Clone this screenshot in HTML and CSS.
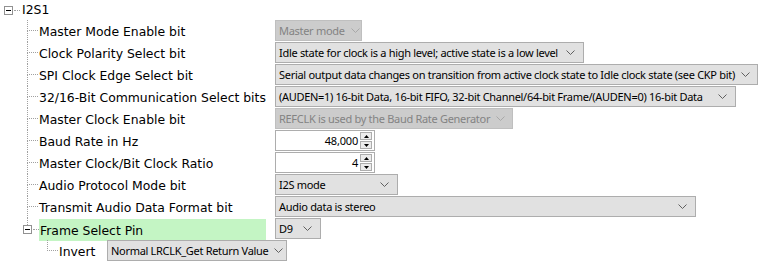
FILE: index.html
```html
<!DOCTYPE html>
<html>
<head>
<meta charset="utf-8">
<link rel="stylesheet" href="styles.css">
</head>
<body>
<div class="tree">
  <div class="row root">
    <span class="exp"><span class="minus"></span></span>
    <span class="hconn"></span>
    <span class="label">I2S1</span>
  </div>

  <div class="row">
    <span class="cell-label"><span class="indent"></span><span class="branch"><span class="up"></span><span class="down"></span></span><span class="label">Master Mode Enable bit</span></span>
    <span class="select disabled w-master"><span class="txt">Master mode</span><svg class="chev" viewBox="0 0 9 5"><path d="M0.5 0.5 L4.5 4.5 L8.5 0.5"/></svg></span>
  </div>

  <div class="row">
    <span class="cell-label"><span class="indent"></span><span class="branch"><span class="up"></span><span class="down"></span></span><span class="label">Clock Polarity Select bit</span></span>
    <span class="select w-ckp"><span class="txt">Idle state for clock is a high level; active state is a low level</span><svg class="chev" viewBox="0 0 9 5"><path d="M0.5 0.5 L4.5 4.5 L8.5 0.5"/></svg></span>
  </div>

  <div class="row">
    <span class="cell-label"><span class="indent"></span><span class="branch"><span class="up"></span><span class="down"></span></span><span class="label">SPI Clock Edge Select bit</span></span>
    <span class="select w-cke"><span class="txt">Serial output data changes on transition from active clock state to Idle clock state (see CKP bit)</span><svg class="chev" viewBox="0 0 9 5"><path d="M0.5 0.5 L4.5 4.5 L8.5 0.5"/></svg></span>
  </div>

  <div class="row">
    <span class="cell-label"><span class="indent"></span><span class="branch"><span class="up"></span><span class="down"></span></span><span class="label">32/16-Bit Communication Select bits</span></span>
    <span class="select w-mode"><span class="txt">(AUDEN=1) 16-bit Data, 16-bit FIFO, 32-bit Channel/64-bit Frame/(AUDEN=0) 16-bit Data</span><svg class="chev" viewBox="0 0 9 5"><path d="M0.5 0.5 L4.5 4.5 L8.5 0.5"/></svg></span>
  </div>

  <div class="row">
    <span class="cell-label"><span class="indent"></span><span class="branch"><span class="up"></span><span class="down"></span></span><span class="label">Master Clock Enable bit</span></span>
    <span class="select disabled w-mclk"><span class="txt">REFCLK is used by the Baud Rate Generator</span><svg class="chev" viewBox="0 0 9 5"><path d="M0.5 0.5 L4.5 4.5 L8.5 0.5"/></svg></span>
  </div>

  <div class="row">
    <span class="cell-label"><span class="indent"></span><span class="branch"><span class="up"></span><span class="down"></span></span><span class="label">Baud Rate in Hz</span></span>
    <span class="spin"><span class="num">48,000</span><span class="btns"><span class="sbtn"><svg viewBox="0 0 5 3"><path d="M0 3 L2.5 0 L5 3 Z"/></svg></span><span class="sbtn"><svg viewBox="0 0 5 3"><path d="M0 0 L5 0 L2.5 3 Z"/></svg></span></span></span>
  </div>

  <div class="row">
    <span class="cell-label"><span class="indent"></span><span class="branch"><span class="up"></span><span class="down"></span></span><span class="label">Master Clock/Bit Clock Ratio</span></span>
    <span class="spin"><span class="num">4</span><span class="btns"><span class="sbtn"><svg viewBox="0 0 5 3"><path d="M0 3 L2.5 0 L5 3 Z"/></svg></span><span class="sbtn"><svg viewBox="0 0 5 3"><path d="M0 0 L5 0 L2.5 3 Z"/></svg></span></span></span>
  </div>

  <div class="row">
    <span class="cell-label"><span class="indent"></span><span class="branch"><span class="up"></span><span class="down"></span></span><span class="label">Audio Protocol Mode bit</span></span>
    <span class="select w-i2s"><span class="txt">I2S mode</span><svg class="chev" viewBox="0 0 9 5"><path d="M0.5 0.5 L4.5 4.5 L8.5 0.5"/></svg></span>
  </div>

  <div class="row">
    <span class="cell-label"><span class="indent"></span><span class="branch"><span class="up"></span><span class="down"></span></span><span class="label">Transmit Audio Data Format bit</span></span>
    <span class="select w-stereo"><span class="txt">Audio data is stereo</span><svg class="chev" viewBox="0 0 9 5"><path d="M0.5 0.5 L4.5 4.5 L8.5 0.5"/></svg></span>
  </div>

  <div class="row">
    <span class="cell-label"><span class="indent short"></span><span class="frame-node"><span class="vline-top"></span><span class="exp small"><span class="minus"></span></span></span><span class="hconn2"></span><span class="label hl">Frame Select Pin</span></span>
    <span class="select w-d9"><span class="txt">D9</span><svg class="chev" viewBox="0 0 9 5"><path d="M0.5 0.5 L4.5 4.5 L8.5 0.5"/></svg></span>
  </div>

  <div class="row sub">
    <span class="indent2"></span><span class="branch last"><span class="up"></span><span class="down"></span></span><span class="label inv">Invert</span>
    <span class="select w-inv"><span class="txt">Normal LRCLK_Get Return Value</span><svg class="chev" viewBox="0 0 9 5"><path d="M0.5 0.5 L4.5 4.5 L8.5 0.5"/></svg></span>
  </div>
</div>
</body>
</html>
```

FILE: styles.css
```css
html, body {
  margin: 0;
  padding: 0;
  background: #ffffff;
}

.tree {
  display: flex;
  flex-direction: column;
  font-family: "DejaVu Sans", Verdana, sans-serif;
  font-size: 12.4px;
  color: #000;
}

.row {
  display: flex;
  align-items: stretch;
  height: 22px;
}

.row.root {
  height: 20px;
  align-items: center;
}

.root .exp {
  margin-left: 4px;
}

.exp {
  box-sizing: border-box;
  width: 9px;
  height: 9px;
  border: 1px solid #919191;
  background: #fff;
  display: flex;
  align-items: center;
  justify-content: center;
  flex: none;
}

.minus {
  width: 5px;
  height: 1px;
  background: #000;
}

.hconn {
  width: 6px;
  border-top: 1px dotted #a0a0a0;
  margin-left: 1px;
  height: 0;
}

.root .label {
  margin-left: 1px;
  line-height: 18px;
}

.cell-label {
  display: flex;
  width: 275px;
  flex: none;
}

.indent {
  width: 27px;
  flex: none;
}

.branch {
  display: flex;
  flex-direction: column;
  width: 11px;
  flex: none;
}

.branch .up {
  height: 10px;
  border-left: 1px dotted #a0a0a0;
  border-bottom: 1px dotted #a0a0a0;
}

.branch .down {
  flex: 1;
  border-left: 1px dotted #a0a0a0;
}

.branch.last .down {
  border-left: none;
}

.label {
  display: flex;
  align-items: center;
  padding-left: 1px;
  white-space: nowrap;
}

.indent.short {
  width: 23px;
}

.frame-node {
  display: flex;
  flex-direction: column;
  width: 9px;
  flex: none;
}

.vline-top {
  height: 7px;
  width: 0;
  margin-left: 4px;
  border-left: 1px dotted #a0a0a0;
}

.hconn2 {
  width: 6px;
  height: 0;
  margin-top: 11px;
  margin-left: 1px;
  border-top: 1px dotted #a0a0a0;
  flex: none;
}

.label.hl {
  background: #c4f5c4;
  width: 226px;
  margin-top: 1px;
  margin-bottom: -1px;
}

.row.sub .indent2 {
  width: 47px;
  flex: none;
}

.label.inv {
  padding-left: 1px;
  width: 47px;
}

/* controls */
.select {
  box-sizing: border-box;
  height: 21px;
  display: flex;
  align-items: center;
  justify-content: space-between;
  background: #e1e1e1;
  border: 1px solid #adadad;
  font-family: "Noto Sans", "Open Sans", sans-serif;
  font-size: 11px;
  letter-spacing: -0.3px;
  color: #000;
  padding: 0 8px 0 3px;
  white-space: nowrap;
  flex: none;
}

.select.disabled {
  background: #cccccc;
  border-color: #bfbfbf;
  color: #838383;
}

.chev {
  width: 9px;
  height: 5px;
  flex: none;
  margin-left: 6px;
}

.chev path {
  fill: none;
  stroke: #606060;
  stroke-width: 1;
}

.disabled .chev path {
  stroke: #a8a8a8;
}

.w-master { width: 87px; }
.w-ckp { width: 309px; }
.w-cke { width: 483px; }
.w-mode { width: 461px; }
.w-mclk { width: 238px; }
.w-i2s { width: 123px; }
.w-stereo { width: 421px; }
.w-d9 { width: 46px; }
.w-inv { width: 180px; margin-left: 1px; }

.spin {
  box-sizing: border-box;
  width: 100px;
  height: 21px;
  border: 1px solid #adadad;
  background: #fff;
  display: flex;
  align-items: center;
  justify-content: flex-end;
  font-family: "Noto Sans", "Open Sans", sans-serif;
  font-size: 11px;
  letter-spacing: -0.2px;
  padding-right: 2px;
  flex: none;
}

.num {
  margin-right: 2px;
}

.btns {
  display: flex;
  flex-direction: column;
  gap: 1px;
}

.sbtn {
  box-sizing: border-box;
  width: 12px;
  height: 8px;
  border: 1px solid #adadad;
  background: #ececec;
  display: flex;
  align-items: center;
  justify-content: center;
}

.sbtn svg {
  width: 5px;
  height: 3px;
}

.sbtn path {
  fill: #000;
}
```
